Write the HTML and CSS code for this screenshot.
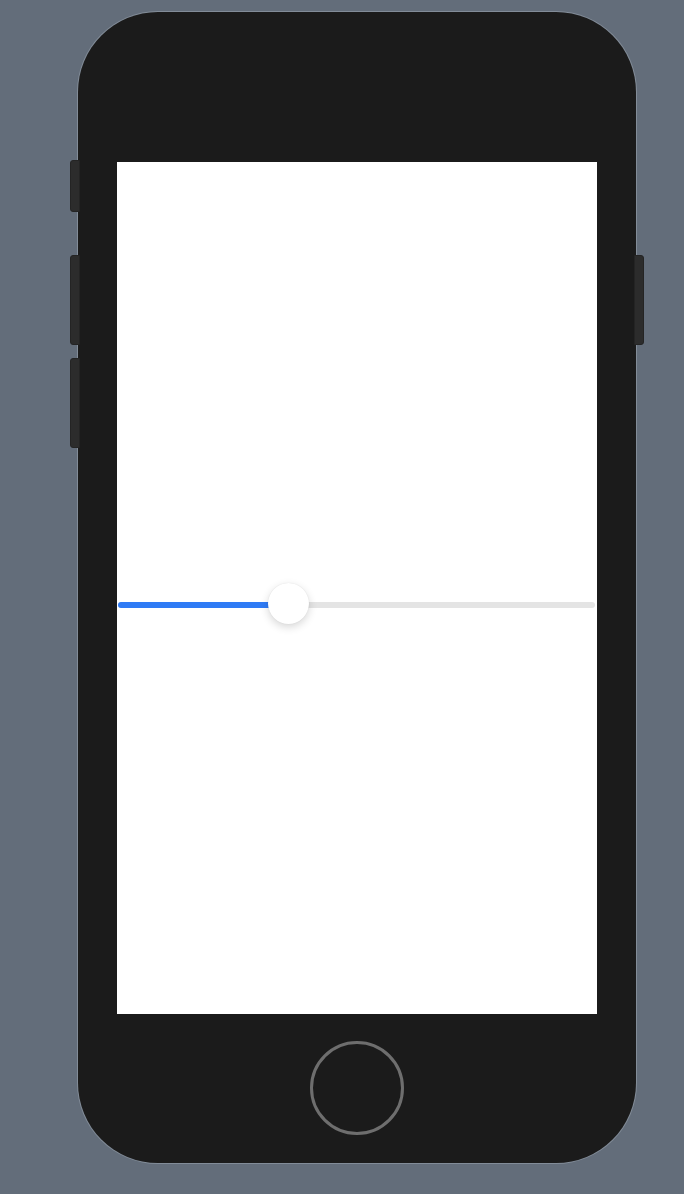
FILE: index.html
```html
<!DOCTYPE html>
<html>
<head>
<meta charset="utf-8">
<link rel="stylesheet" href="styles.css">
</head>
<body>
<div class="page">
  <div class="phone">
    <span class="btn btn-mute"></span>
    <span class="btn btn-vol-up"></span>
    <span class="btn btn-vol-down"></span>
    <span class="btn btn-power"></span>
    <div class="screen">
      <div class="slider">
        <div class="track">
          <div class="fill" style="width:171px"></div>
          <div class="thumb" style="left:150px"></div>
        </div>
      </div>
    </div>
    <div class="home"></div>
  </div>
</div>
</body>
</html>
```
FILE: styles.css
```css
html, body {
  margin: 0;
  padding: 0;
  background: #636d7a;
  font-family: "Liberation Sans", Arial, sans-serif;
}
.page {
  width: 684px;
  height: 1194px;
  padding: 12px 0 0 78px;
  box-sizing: border-box;
}
.phone {
  position: relative;
  width: 558px;
  height: 1151px;
  box-sizing: border-box;
  background: #1b1b1b;
  border-radius: 80px;
  box-shadow: 0 0 0 1px #828c98;
  display: flex;
  flex-direction: column;
  align-items: center;
  padding-top: 150px;
}
.btn {
  position: absolute;
  width: 10px;
  background: #2c2c2c;
  border: 1px solid #242424;
  box-sizing: border-box;
}
.btn-mute { left: -8px; top: 148px; height: 52px; border-radius: 3px 0 0 3px; }
.btn-vol-up { left: -8px; top: 243px; height: 90px; border-radius: 3px 0 0 3px; }
.btn-vol-down { left: -8px; top: 346px; height: 90px; border-radius: 3px 0 0 3px; }
.btn-power { right: -8px; top: 243px; height: 90px; border-radius: 0 3px 3px 0; }
.screen {
  width: 480px;
  height: 852px;
  background: #ffffff;
  display: flex;
  flex-direction: column;
  justify-content: center;
  padding-top: 34px;
  box-sizing: border-box;
}
.slider {
  height: 40px;
  display: flex;
  align-items: center;
  padding: 0 2px 0 1px;
}
.track {
  position: relative;
  flex: 1;
  height: 6px;
  border-radius: 3px;
  background: #e4e4e4;
}
.fill {
  height: 6px;
  border-radius: 3px;
  background: #2f7bf5;
}
.thumb {
  position: absolute;
  top: -19px;
  width: 41px;
  height: 41px;
  border-radius: 50%;
  background: #ffffff;
  box-shadow: 0 3px 8px rgba(0,0,0,0.16), 0 0 1px rgba(0,0,0,0.12);
}
.home {
  margin-top: 27px;
  width: 94px;
  height: 94px;
  box-sizing: border-box;
  border-radius: 50%;
  border: 3.5px solid #6e6e6e;
}
```
